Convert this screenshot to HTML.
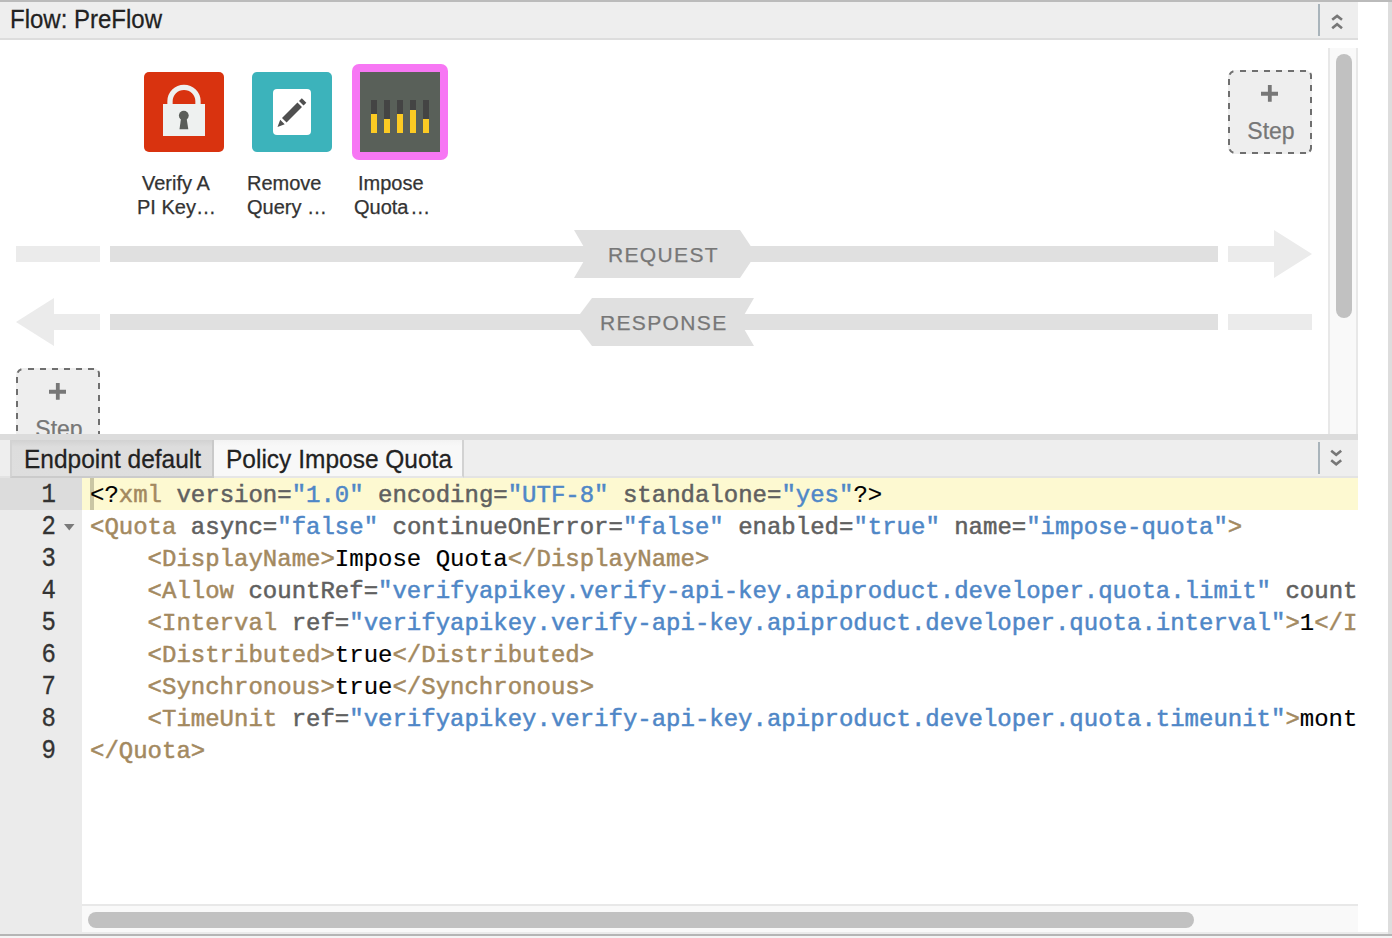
<!DOCTYPE html>
<html><head><meta charset="utf-8">
<style>
*{box-sizing:border-box;margin:0;padding:0}
html,body{width:1392px;height:938px;overflow:hidden;background:#fff;font-family:"Liberation Sans",sans-serif;position:relative;-webkit-text-stroke:0.25px currentColor}
.abs{position:absolute}
.sy{display:inline-block;transform:scaleY(1.055);transform-origin:0 28px}
#topline{left:0;top:0;width:1392px;height:2px;background:#bbb}
#rline{left:1388px;top:2px;width:4px;height:932px;background:#ddd;z-index:5}
#hdr{left:0;top:2px;width:1358px;height:38px;background:#eee;border-bottom:2px solid #ddd}
#hdr .ht{left:10px;top:4px;font-size:24px;color:#222;white-space:nowrap}
.sep{width:2px;background:#a9b4bb}
#canvas{left:0;top:40px;width:1328px;height:394px;overflow:hidden;background:#fff}
.pol{border-radius:5px}
.lbl{font-size:20px;color:#333;white-space:nowrap;line-height:24px}
.step{width:84px;height:84px}
.step .plus{left:0;top:10px;width:80px;text-align:center}
.rq{font-size:21px;letter-spacing:1.35px;color:#777;line-height:24px;white-space:nowrap}
.step .st{left:1px;top:47px;width:84px;text-align:center;font-size:23px;color:#777;line-height:28px}
#vscroll{left:1328px;top:48px;width:30px;height:386px;background:#f9f9f9;border-left:2px solid #e8e8e8;border-right:2px solid #e8e8e8}
#vthumb{left:6px;top:6px;width:16px;height:264px;background:#c1c1c1;border-radius:8px}
#split{left:0;top:434px;width:1358px;height:6px;background:#dcdcdc}
#tabs{left:0;top:440px;width:1358px;height:38px;background:#eee;border-bottom:2px solid #e3e3e3}
.tab{top:0;height:38px;font-size:24.5px;color:#222;line-height:39px;white-space:nowrap}
#editor{left:0;top:478px;width:1358px;height:454px;background:#fff;overflow:hidden}
#gutter{left:0;top:0;width:82px;height:454px;background:#ebebeb}
.ln{left:0;width:56px;text-align:right;font-family:"Liberation Mono",monospace;font-size:24px;color:#333;height:32px;line-height:36px;-webkit-text-stroke:0.3px #333;transform:scaleY(1.14);transform-origin:0 24.3px}
.code{left:90px;font-family:"Liberation Mono",monospace;font-size:24px;height:32px;line-height:36px;white-space:pre;color:#000;-webkit-text-stroke:0.15px}
.g{color:#606060;-webkit-text-stroke:0.5px}.b{color:#4f87c7;-webkit-text-stroke:0.5px}.t{color:#a3895f;-webkit-text-stroke:0.5px}.k{color:#000}
#hscroll{left:82px;top:426px;width:1276px;height:28px;background:#f9f9f9;border-top:2px solid #e8e8e8}
#hthumb{left:6px;top:6px;width:1106px;height:16px;background:#c1c1c1;border-radius:8px}
#botline{left:0;top:932px;width:1392px;height:6px;background:#f4f4f4;border-top:2px solid #ebebeb;border-bottom:2px solid #f4f4f4}
#botline2{left:0;top:934px;width:1392px;height:2px;background:#b5b5b5}
</style></head><body>
<div class="abs" id="topline"></div>
<div class="abs" id="rline"></div>
<div class="abs" id="hdr">
  <div class="abs ht" style="transform:scaleY(1.055);transform-origin:0 23px">Flow: PreFlow</div>
  <div class="abs sep" style="left:1318px;top:2px;height:32px"></div>
  <svg class="abs" style="left:1326px;top:8px" width="24" height="24" viewBox="0 0 24 24"><path d="M6.2 9.8 L11.1 5.9 L16 9.8 M6.2 18.3 L11.1 14.2 L16 18.3" fill="none" stroke="#777" stroke-width="2.6"/></svg>
</div>

<div class="abs" id="canvas">
  <svg class="abs" style="left:0;top:-40px" width="1328" height="474" viewBox="0 0 1328 474">
    <!-- Verify API Key -->
    <g transform="translate(144,72)">
      <rect x="0" y="0" width="80" height="80" rx="5" fill="#d9330f"/>
      <path d="M26 34 V29.3 A14 14 0 0 1 54 29.3 V34" fill="none" stroke="#eef1f0" stroke-width="5.3"/>
      <rect x="19" y="32" width="42" height="32" fill="#eef1f0"/>
      <circle cx="39.8" cy="43.6" r="4.9" fill="#5a5e5a"/>
      <path d="M37.2 45 L42.4 45 L44.3 57.3 L35.5 57.3 Z" fill="#5a5e5a"/>
    </g>
    <!-- Remove Query Param -->
    <g transform="translate(252,72)">
      <rect x="0" y="0" width="80" height="80" rx="5" fill="#3cb3bb"/>
      <rect x="21" y="17" width="38" height="46" rx="4" fill="#fff"/>
      <g transform="translate(25.5,55) rotate(-45)" fill="#4f4f4f">
        <path d="M0 0 L7 -3.2 L7 3.2 Z"/>
        <rect x="9.6" y="-3.2" width="21.8" height="6.4"/>
        <rect x="33.6" y="-3.2" width="4" height="6.4"/>
      </g>
    </g>
    <!-- Impose Quota (selected) -->
    <rect x="352" y="64" width="96" height="96" rx="7" fill="#f777f4"/>
    <rect x="360" y="72" width="80" height="80" fill="#596059"/>
    <g fill="#444">
      <rect x="371" y="100" width="6" height="33"/><rect x="384" y="100" width="6" height="33"/><rect x="397" y="100" width="6" height="33"/><rect x="410" y="100" width="6" height="33"/><rect x="423" y="100" width="6" height="33"/>
    </g>
    <g fill="#fccb23">
      <rect x="371" y="114" width="6" height="19"/><rect x="384" y="119" width="6" height="14"/><rect x="397" y="114" width="6" height="19"/><rect x="410" y="110" width="6" height="23"/><rect x="423" y="119" width="6" height="14"/>
    </g>
    <!-- request row -->
    <rect x="16" y="246" width="84" height="16" fill="#ebebeb"/>
    <rect x="110" y="246" width="1108" height="16" fill="#e0e0e0"/>
    <path d="M1228 246 H1274 V230 L1312 254 L1274 278 V262 H1228 Z" fill="#ebebeb"/>
    <path d="M574 230 H740 L756 254 L740 278 H574 L588 254 Z" fill="#e0e0e0"/>
    <!-- response row -->
    <path d="M100 314 H54 V298 L16 322 L54 346 V330 H100 Z" fill="#ebebeb"/>
    <rect x="110" y="314" width="1108" height="16" fill="#e0e0e0"/>
    <rect x="1228" y="314" width="84" height="16" fill="#ebebeb"/>
    <path d="M592 298 H754 L740 322 L754 346 H592 L574 322 Z" fill="#e0e0e0"/>
  </svg>
  <div class="abs rq" style="left:608px;top:203px">REQUEST</div>
  <div class="abs rq" style="left:600px;top:271px">RESPONSE</div>

  <div class="abs lbl" style="left:142px;top:131px">Verify A</div>
  <div class="abs lbl" style="left:137px;top:155px">PI Key…</div>
  <div class="abs lbl" style="left:247px;top:131px">Remove</div>
  <div class="abs lbl" style="left:247px;top:155px">Query …</div>
  <div class="abs lbl" style="left:358px;top:131px">Impose</div>
  <div class="abs lbl" style="left:354px;top:155px">Quota&#8202;…</div>

  <div class="abs step" style="left:1228px;top:30px"><svg class="abs" style="left:0;top:0" width="84" height="84" viewBox="0 0 84 84"><rect x="0" y="0" width="84" height="84" rx="7" fill="#eee"/><path d="M12 1h6M24 1h6M36 1h6M48 1h6M60 1h6M72 1h6M12 83h6M24 83h6M36 83h6M48 83h6M60 83h6M72 83h6M1 9v6M1 21v6M1 33v6M1 45v6M1 57v6M1 69v6M83 15v6M83 27v6M83 39v6M83 51v6M83 63v6M1.6 4.6A6 6 0 0 1 5.4 1.3M1.6 79.4A6 6 0 0 0 5.4 82.7M82.2 2.9A6 6 0 0 1 83 5V9M83 75V78.5A6 6 0 0 1 81.5 81.5" stroke="#6f6f6f" stroke-width="2" fill="none"/><path d="M33 23.75H50M41.8 15V31.7" stroke="#777" stroke-width="3.8" fill="none"/></svg><div class="abs st">Step</div></div>
  <div class="abs step" style="left:16px;top:328px"><svg class="abs" style="left:0;top:0" width="84" height="84" viewBox="0 0 84 84"><rect x="0" y="0" width="84" height="84" rx="7" fill="#eee"/><path d="M12 1h6M24 1h6M36 1h6M48 1h6M60 1h6M72 1h6M12 83h6M24 83h6M36 83h6M48 83h6M60 83h6M72 83h6M1 9v6M1 21v6M1 33v6M1 45v6M1 57v6M1 69v6M83 15v6M83 27v6M83 39v6M83 51v6M83 63v6M1.6 4.6A6 6 0 0 1 5.4 1.3M1.6 79.4A6 6 0 0 0 5.4 82.7M82.2 2.9A6 6 0 0 1 83 5V9M83 75V78.5A6 6 0 0 1 81.5 81.5" stroke="#6f6f6f" stroke-width="2" fill="none"/><path d="M33 23.75H50M41.8 15V31.7" stroke="#777" stroke-width="3.8" fill="none"/></svg><div class="abs st">Step</div></div>
</div>

<div class="abs" id="vscroll"><div class="abs" id="vthumb"></div></div>
<div class="abs" id="split"></div>
<div class="abs" id="tabs">
  <div class="abs tab" style="left:10px;width:204px;background:linear-gradient(#d2d2d2,#dddddd 7px,#dedede);border-left:2px solid #d3d3d3;border-right:2px solid #c9c9c9;border-bottom:2px solid #cbcbcb;padding-left:12px"><span class="sy">Endpoint default</span></div>
  <div class="abs tab" style="left:214px;width:250px;background:linear-gradient(#f3f3f3,#f8f8f8 6px);border-right:2px solid #d2d2d2;border-bottom:2px solid #e6e6e6;padding-left:12px"><span class="sy">Policy Impose Quota</span></div>
  <div class="abs sep" style="left:1318px;top:2px;height:32px"></div>
  <svg class="abs" style="left:1324px;top:7px" width="24" height="24" viewBox="0 0 24 24"><path d="M7.2 3.8 L12.2 7.8 L17.2 3.8 M7.2 13.3 L12.2 17.3 L17.2 13.3" fill="none" stroke="#777" stroke-width="2.6"/></svg>
</div>

<div class="abs" id="editor">
  <div class="abs" id="gutter"></div>
  <div class="abs" style="left:0;top:0;width:82px;height:32px;background:#dcdcdc"></div>
  <div class="abs" style="left:82px;top:0;width:1276px;height:32px;background:#fdf9d1"></div>
  <div class="abs" style="left:90px;top:0;width:4px;height:32px;background:#cac6a4"></div>
  <div class="abs ln" style="top:0">1</div>
  <div class="abs ln" style="top:32px">2</div>
  <svg class="abs" style="left:64px;top:46px" width="11" height="7"><path d="M0 0H10.5L5.25 6.5Z" fill="#7a7a7a"/></svg>
  <div class="abs ln" style="top:64px">3</div>
  <div class="abs ln" style="top:96px">4</div>
  <div class="abs ln" style="top:128px">5</div>
  <div class="abs ln" style="top:160px">6</div>
  <div class="abs ln" style="top:192px">7</div>
  <div class="abs ln" style="top:224px">8</div>
  <div class="abs ln" style="top:256px">9</div>

  <div class="abs code" style="top:0"><span class="k">&lt;?</span><span class="t">xml</span> <span class="g">version=</span><span class="b">"1.0"</span> <span class="g">encoding=</span><span class="b">"UTF-8"</span> <span class="g">standalone=</span><span class="b">"yes"</span><span class="k">?&gt;</span></div>
  <div class="abs code" style="top:32px"><span class="t">&lt;Quota</span> <span class="g">async=</span><span class="b">"false"</span> <span class="g">continueOnError=</span><span class="b">"false"</span> <span class="g">enabled=</span><span class="b">"true"</span> <span class="g">name=</span><span class="b">"impose-quota"</span><span class="t">&gt;</span></div>
  <div class="abs code" style="top:64px">    <span class="t">&lt;DisplayName&gt;</span>Impose Quota<span class="t">&lt;/DisplayName&gt;</span></div>
  <div class="abs code" style="top:96px">    <span class="t">&lt;Allow</span> <span class="g">countRef=</span><span class="b">"verifyapikey.verify-api-key.apiproduct.developer.quota.limit"</span> <span class="g">count</span></div>
  <div class="abs code" style="top:128px">    <span class="t">&lt;Interval</span> <span class="g">ref=</span><span class="b">"verifyapikey.verify-api-key.apiproduct.developer.quota.interval"</span><span class="t">&gt;</span>1<span class="t">&lt;/I</span></div>
  <div class="abs code" style="top:160px">    <span class="t">&lt;Distributed&gt;</span>true<span class="t">&lt;/Distributed&gt;</span></div>
  <div class="abs code" style="top:192px">    <span class="t">&lt;Synchronous&gt;</span>true<span class="t">&lt;/Synchronous&gt;</span></div>
  <div class="abs code" style="top:224px">    <span class="t">&lt;TimeUnit</span> <span class="g">ref=</span><span class="b">"verifyapikey.verify-api-key.apiproduct.developer.quota.timeunit"</span><span class="t">&gt;</span>mont</div>
  <div class="abs code" style="top:256px"><span class="t">&lt;/Quota&gt;</span></div>

  <div class="abs" id="hscroll"><div class="abs" id="hthumb"></div></div>
</div>
<div class="abs" id="botline"></div><div class="abs" id="botline2"></div>
</body></html>
